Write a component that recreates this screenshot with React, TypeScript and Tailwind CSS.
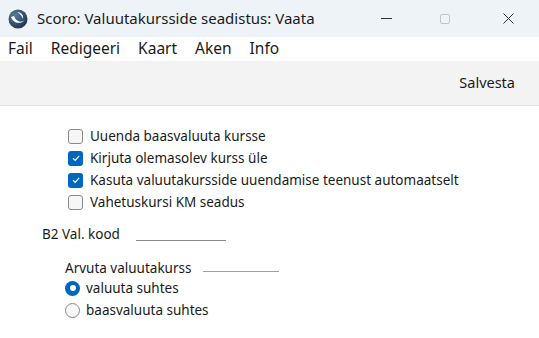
import React from 'react';

const font = { fontFamily: '"Noto Sans", "Open Sans", sans-serif' };

/** Scoro logo: dark globe with white swoosh */
const Logo = () => (
  <svg width="20" height="20" viewBox="0 0 20 20">
    <defs>
      <radialGradient id="lg" cx="35%" cy="30%" r="75%">
        <stop offset="0%" stopColor="#5b7a98" />
        <stop offset="100%" stopColor="#1c3550" />
      </radialGradient>
    </defs>
    <circle cx="10" cy="10" r="9.5" fill="url(#lg)" />
    <path d="M3 8 C 5 14, 12 16, 17 11 C 13 14, 8 13, 6 7 Z" fill="#ffffff" />
    <path d="M9 3 C 13 3, 16 6, 15 10 C 14 7, 12 5, 9 3 Z" fill="#e6eef5" />
  </svg>
);

const Checkbox = ({ checked, label }: { checked: boolean; label: string }) => (
  <div className="flex items-center h-[22px]">
    {checked ? (
      <div className="w-[15px] h-[15px] rounded-[3px] bg-[#0067c0] flex items-center justify-center">
        <svg width="10" height="10" viewBox="0 0 10 10">
          <path d="M2 5.2 L4.2 7.3 L8.2 2.8" stroke="#ffffff" strokeWidth="1.2" fill="none" />
        </svg>
      </div>
    ) : (
      <div className="w-[15px] h-[15px] rounded-[3px] border border-[#8a8a8a] bg-[#f6f6f6]" />
    )}
    <span className="ml-[7px] text-[13.5px] text-[#1a1a1a]">{label}</span>
  </div>
);

const Radio = ({ checked, label }: { checked: boolean; label: string }) => (
  <div className="flex items-center h-[22px]">
    {checked ? (
      <div className="w-[15px] h-[15px] rounded-full bg-[#0067c0] flex items-center justify-center">
        <div className="w-[6px] h-[6px] rounded-full bg-white" />
      </div>
    ) : (
      <div className="w-[15px] h-[15px] rounded-full border border-[#8a8a8a] bg-[#f6f6f6]" />
    )}
    <span className="ml-[6px] text-[13.5px] text-[#1a1a1a]">{label}</span>
  </div>
);

export default function App() {
  return (
    <div className="w-[539px] h-[338px] bg-white flex flex-col overflow-hidden rounded-b-[8px]" style={font}>
      {/* tiitliriba */}
      <div className="h-[37px] bg-[#eef3f8] flex items-center pl-[8px] shrink-0">
        <Logo />
        <span className="ml-[9px] text-[15px] text-[#1a1a1a]">Scoro: Valuutakursside seadistus: Vaata</span>
        <div className="ml-auto flex items-center h-full">
          <div className="w-[61px] flex justify-center">
            <div className="w-[11px] h-[1px] bg-[#333]" />
          </div>
          <div className="w-[61px] flex justify-center pr-[6px]">
            <div className="w-[10px] h-[10px] border border-[#c4c4c4] rounded-[2px]" />
          </div>
          <div className="w-[61px] flex justify-center">
            <svg width="11" height="11" viewBox="0 0 11 11">
              <path d="M0.5 0.5 L10.5 10.5 M10.5 0.5 L0.5 10.5" stroke="#333" strokeWidth="1" />
            </svg>
          </div>
        </div>
      </div>

      {/* menüü */}
      <div className="h-[24px] bg-white flex items-center pl-[8px] gap-[18px] text-[15.5px] text-[#1a1a1a] shrink-0">
        <span>Fail</span>
        <span>Redigeeri</span>
        <span>Kaart</span>
        <span>Aken</span>
        <span>Info</span>
      </div>

      {/* tööriistariba */}
      <div className="h-[45px] bg-[#f3f3f3] border-b border-[#e3e3e3] flex items-center justify-end pr-[24px] shrink-0">
        <span className="text-[14.5px] text-[#1a1a1a]">Salvesta</span>
      </div>

      {/* sisu */}
      <div className="flex-1 flex flex-col pt-[19px]">
        <div className="pl-[68px] flex flex-col">
          <Checkbox checked={false} label="Uuenda baasvaluuta kursse" />
          <Checkbox checked={true} label="Kirjuta olemasolev kurss üle" />
          <Checkbox checked={true} label="Kasuta valuutakursside uuendamise teenust automaatselt" />
          <Checkbox checked={false} label="Vahetuskursi KM seadus" />
        </div>

        <div className="flex items-center pl-[42px] mt-[10px] h-[22px]">
          <span className="text-[13.5px] text-[#1a1a1a]">B2 Val. kood</span>
          <div className="ml-[16px] w-[90px] h-[1px] bg-[#8a8a8a] mt-[12px]" />
        </div>

        <div className="pl-[65px] mt-[14px] flex flex-col">
          <div className="flex items-center h-[18px]">
            <span className="text-[13.5px] text-[#1a1a1a]">Arvuta valuutakurss</span>
            <div className="ml-[12px] w-[76px] h-[1px] bg-[#a0a0a0] mt-[6px]" />
          </div>
          <Radio checked={true} label="valuuta suhtes" />
          <Radio checked={false} label="baasvaluuta suhtes" />
        </div>
      </div>
    </div>
  );
}
